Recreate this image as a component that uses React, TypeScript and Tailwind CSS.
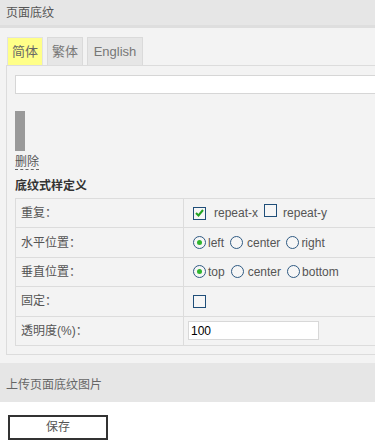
import React from 'react';

const font = { fontFamily: '"Liberation Sans", "Noto Sans CJK SC", sans-serif' };

function Check({ checked }: { checked?: boolean }) {
  return (
    <span className="inline-flex h-[13px] w-[13px] items-center justify-center border border-[#1f4e79] bg-[#f6f6f6]">
      {checked && (
        <svg width="9" height="8" viewBox="0 0 9 8">
          <path d="M1 4 L3.5 6.5 L8 1" fill="none" stroke="#22a322" strokeWidth="2" />
        </svg>
      )}
    </span>
  );
}

function Radio({ checked }: { checked?: boolean }) {
  return (
    <span className="inline-flex h-[13px] w-[13px] items-center justify-center rounded-full border border-[#2f5a82] bg-[#f6f6f6]">
      {checked && <span className="h-[5px] w-[5px] rounded-full bg-[#2fb52f]" />}
    </span>
  );
}

export default function App() {
  const rows: { label: string; content: React.ReactNode }[] = [
    {
      label: '重复：',
      content: (
        <div className="flex items-center">
          <Check checked />
          <span className="ml-[8px]">repeat-x</span>
          <span className="ml-[6px]"><Check /></span>
          <span className="ml-[6px]">repeat-y</span>
        </div>
      ),
    },
    {
      label: '水平位置：',
      content: (
        <div className="flex items-center">
          <Radio checked />
          <span className="ml-[2px]">left</span>
          <span className="ml-[6px] flex"><Radio /></span>
          <span className="ml-[4px]">center</span>
          <span className="ml-[6px] flex"><Radio /></span>
          <span className="ml-[2px]">right</span>
        </div>
      ),
    },
    {
      label: '垂直位置：',
      content: (
        <div className="flex items-center">
          <Radio checked />
          <span className="ml-[2px]">top</span>
          <span className="ml-[6px] flex"><Radio /></span>
          <span className="ml-[4px]">center</span>
          <span className="ml-[6px] flex"><Radio /></span>
          <span className="ml-[2px]">bottom</span>
        </div>
      ),
    },
    { label: '固定：', content: <div className="flex items-center"><Check /></div> },
    {
      label: '透明度(%)：',
      content: (
        <div className="-ml-[5px] flex h-[19px] w-[131px] items-center border border-[#d8d8d8] bg-white pl-[2px] text-[12px] text-black">
          100
        </div>
      ),
    },
  ];

  return (
    <div className="h-[447px] w-[375px] overflow-hidden bg-white text-[12px] text-[#5a5a5a]" style={font}>
      <div className="flex h-[28px] items-center border-b-[3px] border-[#dedede] bg-[#e6e6e6] pl-[6px] text-[#555]">
        页面底纹
      </div>
      <div className="bg-[#f3f3f3] pl-[6px] pt-[9px] pb-[8px]">
        <div className="flex gap-[4px] pl-px">
          <div className="flex h-[28px] w-[36px] items-center justify-center border border-b-0 border-[#e2e2e2] bg-[#ffff88] text-[13px] text-[#666]">
            简体
          </div>
          <div className="flex h-[28px] w-[36px] items-center justify-center border border-b-0 border-[#dadada] bg-[#e6e6e6] text-[13px] text-[#777]">
            繁体
          </div>
          <div className="flex h-[28px] w-[56px] items-center justify-center border border-b-0 border-[#dadada] bg-[#e6e6e6] text-[13px] text-[#777]">
            English
          </div>
        </div>
        <div className="w-[420px] border border-[#dcdcdc] pb-[8px] pl-[8px] pt-[9px]">
          <div className="h-[19px] w-[400px] border border-[#d6d6d6] bg-white" />
          <div className="mt-[17px] h-[40px] w-[10px] bg-[#999999]" />
          <div className="mt-[4px] w-fit border-b border-dashed border-[#666] leading-[14px] text-[#555]">删除</div>
          <div className="mt-[7px] text-[12px] font-bold text-[#333]">底纹式样定义</div>
          <div className="mt-[3px] w-[420px] border-t border-l border-[#dcdcdc]">
            {rows.map((r) => (
              <div key={r.label} className="flex h-[29.4px] border-b border-[#dcdcdc]">
                <div className="flex w-[168px] items-center border-r border-[#dcdcdc] pl-[5px] text-[#555]">
                  {r.label}
                </div>
                <div className="flex items-center pl-[9px] text-[#555]">{r.content}</div>
              </div>
            ))}
          </div>
        </div>
      </div>
      <div className="flex h-[39px] items-center bg-[#e6e6e6] pl-[6px] pt-[6px] text-[#666]">上传页面底纹图片</div>
      <div className="pl-[8px] pt-[13px]">
        <div className="flex h-[25px] w-[100px] items-center justify-center border-2 border-[#333] bg-white text-[#555]">
          保存
        </div>
      </div>
    </div>
  );
}
